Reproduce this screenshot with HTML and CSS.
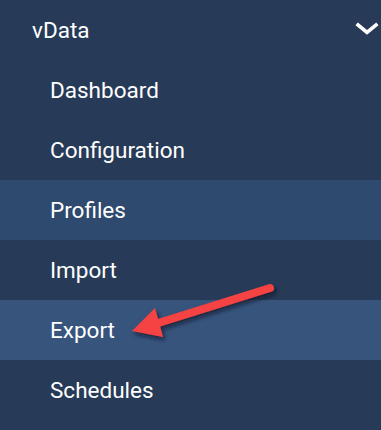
FILE: index.html
```html
<!DOCTYPE html>
<html>
<head>
<meta charset="utf-8">
<link rel="stylesheet" href="styles.css">
</head>
<body>
<nav class="sidebar">
  <div class="group-head">
    <span class="group-title">vData</span>
    <svg class="chevron" width="24" height="14" viewBox="0 0 24 14"><polyline points="3,3 12,10.5 21,3" fill="none" stroke="#ffffff" stroke-width="3.6" stroke-linecap="square" stroke-linejoin="miter"/></svg>
  </div>
  <ul class="menu">
    <li class="item">Dashboard</li>
    <li class="item">Configuration</li>
    <li class="item hover">Profiles</li>
    <li class="item">Import</li>
    <li class="item active">Export</li>
    <li class="item">Schedules</li>
  </ul>
  <svg class="arrow" width="381" height="430" viewBox="0 0 381 430">
    <defs>
      <filter id="sh" x="-20%" y="-50%" width="140%" height="200%">
        <feDropShadow dx="2" dy="3" stdDeviation="2" flood-color="#0a1424" flood-opacity="0.7"/>
      </filter>
    </defs>
    <g filter="url(#sh)" fill="#f54242">
      <line x1="270" y1="288" x2="155" y2="324" stroke="#f54242" stroke-width="8" stroke-linecap="round"/>
      <polygon points="132,331 155,308 163,337"/>
    </g>
  </svg>
</nav>
</body>
</html>
```
FILE: styles.css
```css
html, body {
  margin: 0;
  padding: 0;
  background: #273b58;
}
.sidebar {
  position: relative;
  width: 381px;
  height: 430px;
  background: #273b58;
  font-family: Roboto, "Liberation Sans", sans-serif;
  color: #ffffff;
  overflow: hidden;
}
.group-head {
  height: 60px;
  display: flex;
  align-items: center;
  justify-content: space-between;
  padding: 0 2px 0 32px;
  font-size: 22.5px;
}
.chevron {
  display: block;
  margin-top: -2px;
}
.menu {
  list-style: none;
  margin: 0;
  padding: 0;
}
.item {
  height: 60px;
  display: flex;
  align-items: center;
  padding-left: 50px;
  font-size: 22.5px;
}
.item.hover {
  background: #2e4a6e;
}
.item.active {
  background: #36547c;
}
.arrow {
  position: absolute;
  left: 0;
  top: 0;
  pointer-events: none;
}
```
